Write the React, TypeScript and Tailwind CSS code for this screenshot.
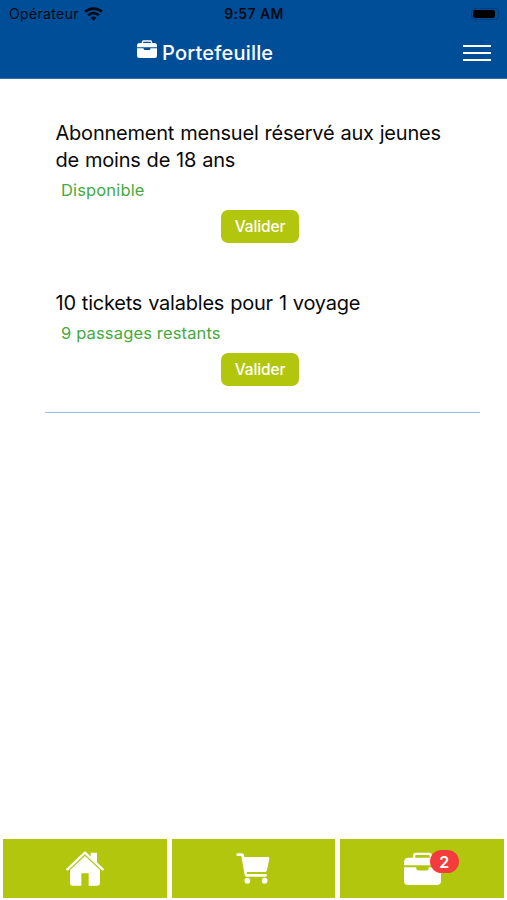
import clsx from 'clsx';

const tickets = [
    {
        id: 1,
        title: 'Abonnement mensuel réservé aux jeunes de moins de 18 ans',
        status: 'Disponible',
    },
    {
        id: 2,
        title: '10 tickets valables pour 1 voyage',
        status: '9 passages restants',
    },
];

function WifiIcon() {
    return (
        <svg viewBox="0 0 57 42" className="w-[19px] h-[14px]" fill="none" stroke="#050a14" strokeWidth="8.5">
            <path d="M3.5 14.5C17 1.5 40 1.5 53.5 14.5" />
            <path d="M12.5 25C22 16 35 16 44.5 25" />
            <path d="M28.5 41l-8.5-9q8.5-7 17 0z" fill="#050a14" stroke="none" />
        </svg>
    );
}

function BriefcaseIcon({ className }: { className?: string }) {
    return (
        <svg viewBox="0 0 112 98" className={className} fill="#fff" preserveAspectRatio="none">
            <path d="M27 20V11q0-9 9-9h40q9 0 9 9v9h-7v-7q0-4-4-4H38q-4 0-4 4v7z" />
            <path d="M14 17h84q14 0 14 14v8H0v-8q0-14 14-14z" />
            <path d="M0 45h37v3q0 7 7 7h24q7 0 7-7v-3h37v41q0 12-12 12H12Q0 98 0 86z" />
        </svg>
    );
}

function HomeIcon() {
    return (
        <svg viewBox="0 0 114 105" className="w-[38px] h-[35px]" fill="#fff">
            <path d="M74 5h19v33L74 21z" />
            <path d="M4 55L57 5l53 50" fill="none" stroke="#fff" strokeWidth="7" strokeLinecap="round" strokeLinejoin="round" />
            <path d="M57 15l45 42v40q0 7-7 7H68V67H46v37H19q-7 0-7-7V57z" />
        </svg>
    );
}

function CartIcon() {
    return (
        <svg viewBox="0 0 102 93" className="w-[34px] h-[31px]" fill="#fff">
            <path d="M5 1h13q5 0 6 5l1 6h71q5 0 4 5l-7 35q-1 5-6 5H32l1 6h55q5 0 5 4t-5 4H32q-5 0-6-5L16 9H5Q1 9 1 5t4-4z" />
            <circle cx="34" cy="83" r="8.5" />
            <circle cx="86" cy="83" r="8.5" />
        </svg>
    );
}

function TicketRow({ title, status, last }: { title: string; status: string; last: boolean }) {
    return (
        <div className={clsx('ml-[45px] mr-[27px] px-[10px]', last ? 'h-[123px] border-b border-[#a3bfdc]' : 'h-[170px]')}>
            <h2 className="w-[400px] pl-[0.5px] text-[20px] leading-[27px] tracking-[-0.22px] [word-spacing:0.6px] text-[#080808]">{title}</h2>
            <p className="mt-[5px] ml-[6px] text-[16.5px] leading-[22px] tracking-[0.15px] text-[#46a941]">{status}</p>
            <button className="mt-[9px] ml-[166px] block w-[78px] h-[33px] pt-px rounded-[7px] bg-[#b3c60e] text-[15.5px] font-medium tracking-[-0.1px] text-white">
                Valider
            </button>
        </div>
    );
}

export default function App() {
    return (
        <div className="w-[507px] h-[900px] flex flex-col bg-white overflow-hidden font-['Inter',sans-serif]">
            <header className="h-[79px] shrink-0 bg-[#004e98] border-b border-[#2d70ac]">
                {/* Status bar */}
                <div className="h-[27px] grid grid-cols-3 items-center pl-[9px] pr-[8px] text-[#050a14]">
                    <div className="flex items-center gap-[5px]">
                        <span className="text-[14px] tracking-[0.35px]">Opérateur</span>
                        <WifiIcon />
                    </div>
                    <span className="text-center text-[14px] font-semibold tracking-[0.4px]">9:57 AM</span>
                    <div className="flex justify-end">
                        <div className="w-[28px] h-[12px] rounded-[4px] border border-[#003d7b] p-px">
                            <div className="h-full w-[22px] rounded-[2px] bg-black" />
                        </div>
                    </div>
                </div>

                {/* Title bar */}
                <div className="h-[51px] flex items-center pl-[137px] pr-[16px]">
                    <BriefcaseIcon className="w-[20px] h-[18px] mb-[7px]" />
                    <h1 className="ml-[5px] text-[20px] font-medium tracking-[0.2px] text-white">Portefeuille</h1>
                    <button className="ml-auto w-[28px] flex flex-col gap-[5px]" aria-label="Menu">
                        <span className="h-[2px] w-full bg-white" />
                        <span className="h-[2px] w-full bg-white" />
                        <span className="h-[2px] w-full bg-white" />
                    </button>
                </div>
            </header>

            <main className="flex-1 pt-[41px]">
                {tickets.map((ticket, i) => (
                    <TicketRow key={ticket.id} title={ticket.title} status={ticket.status} last={i === tickets.length - 1} />
                ))}
            </main>

            <nav className="h-[61px] shrink-0 grid grid-cols-3 gap-[5px] px-[3px] pb-[2px]">
                <button className="flex items-center justify-center bg-[#b3c60e]">
                    <HomeIcon />
                </button>
                <button className="flex items-center justify-center bg-[#b3c60e]">
                    <CartIcon />
                </button>
                <button className="flex items-center justify-center bg-[#b3c60e]">
                    <span className="relative">
                        <BriefcaseIcon className="w-[37px] h-[33px]" />
                        <span className="absolute left-[26px] -top-[2px] w-[29px] h-[23px] rounded-full bg-[#f43c3c] flex items-center justify-center text-[16px] font-semibold text-white">
                            2
                        </span>
                    </span>
                </button>
            </nav>
        </div>
    );
}
